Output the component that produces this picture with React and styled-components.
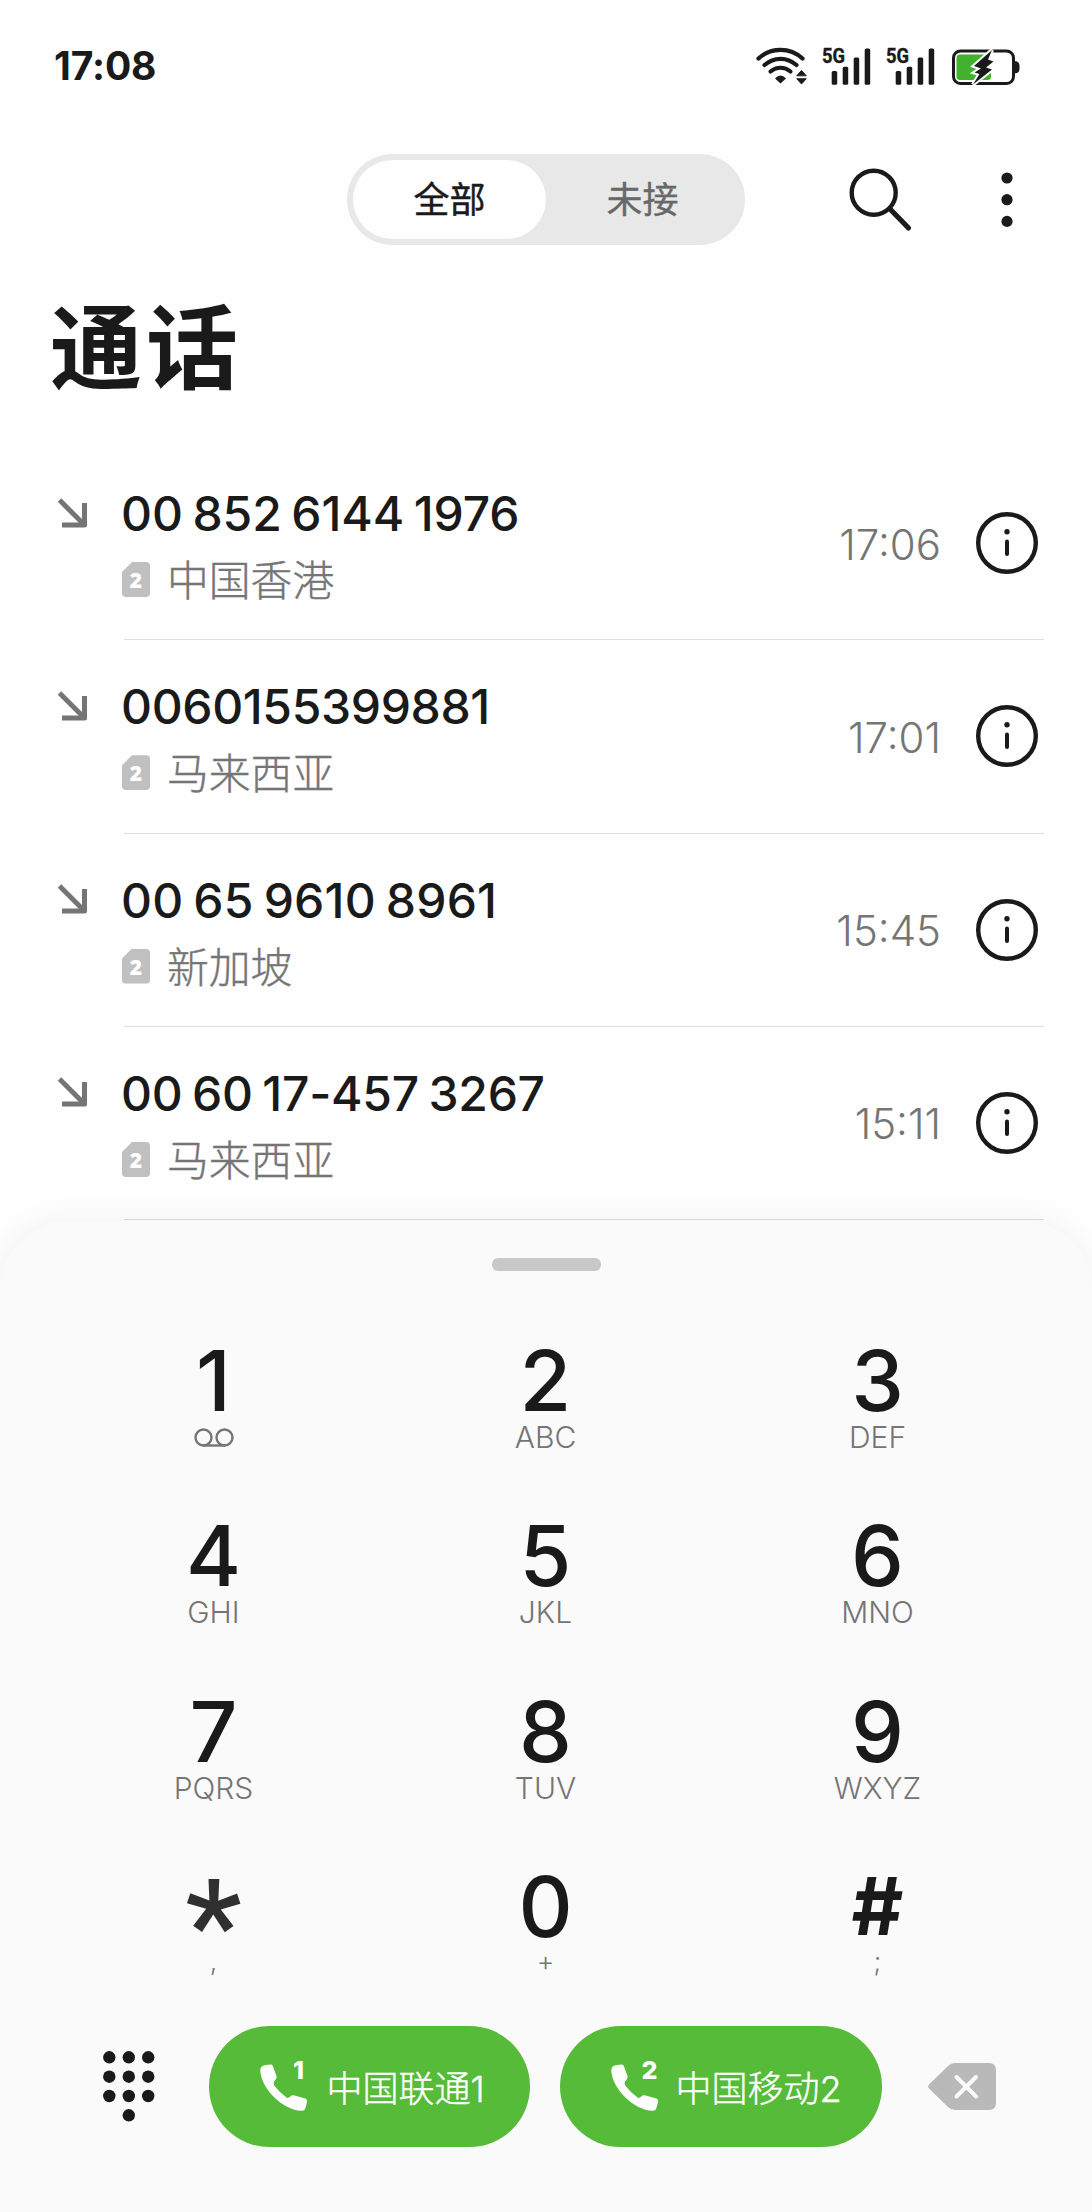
import React from "react";
import styled, { createGlobalStyle } from "styled-components";

const LATIN = `Inter, Roboto, "Noto Sans CJK SC", sans-serif`;
const CJK = `"Noto Sans CJK SC", "Noto Sans", sans-serif`;
const INK = "#1a1a1a";
const MUTED = "#757575";

const GlobalStyle = createGlobalStyle`
  * { box-sizing: border-box; }
  html, body { margin: 0; padding: 0; background: #fefefe; }
  body { font-family: ${LATIN}; color: ${INK}; }
  svg { display: block; flex: none; overflow: visible; }
  button { border: 0; padding: 0; background: none; font: inherit; color: inherit; }
`;

const Screen = styled.main`
  width: 1092px;
  height: 2212px;
  overflow: hidden;
  display: flex;
  flex-direction: column;
  background: #fefefe;
`;

const StatusBar = styled.header`
  height: 132px;
  padding: 0 72px 0 54px;
  display: flex;
  align-items: center;
  justify-content: space-between;
`;

const Clock = styled.span`
  font-size: 39px;
  font-weight: 650;
  line-height: 48px;
  letter-spacing: -0.1px;
`;

const StatusIcons = styled.div`
  display: flex;
  align-items: center;
  gap: 15px;
`;

const BatterySlot = styled.div`
  margin-left: 2px;
`;

const Toolbar = styled.nav`
  height: 113px;
  padding: 22px 77px 0 347px;
  display: flex;
  align-items: center;
`;

const Segmented = styled.div`
  width: 398px;
  height: 91px;
  padding: 6px;
  display: flex;
  border-radius: 46px;
  background: #e8e8e8;
`;

const Segment = styled.button`
  width: 193px;
  height: 79px;
  border-radius: 40px;
  background: ${(p) => (p.$active ? "#fefefe" : "transparent")};
  color: ${(p) => (p.$active ? INK : "#686868")};
  font-family: ${CJK};
  font-size: 36px;
  font-weight: 400;
  -webkit-text-stroke: 0.4px currentColor;
  line-height: 73px;
  padding-bottom: 4px;
`;

const ToolIcons = styled.div`
  margin-left: 104px;
  display: flex;
  align-items: center;
  gap: 88px;
`;

const Title = styled.h1`
  height: 202px;
  margin: 0;
  padding: 31px 0 0 50px;
  font-family: ${CJK};
  font-size: 92px;
  font-weight: 700;
  line-height: 132px;
  letter-spacing: 4px;
`;

const CallList = styled.ul`
  list-style: none;
  margin: 0;
  padding: 0;
`;

const CallRow = styled.li`
  height: 193.3px;
  display: flex;
  padding: 0 48px 0 58px;
`;

const ArrowCell = styled.div`
  width: 66px;
  padding-top: 50.5px;
`;

const CallBody = styled.div`
  flex: 1;
  display: flex;
  justify-content: space-between;
  border-bottom: 1px solid #dedede;
`;

const CallInfo = styled.div`
  margin-left: -3px;
  padding-top: 37px;
`;

const PhoneNumber = styled.div`
  font-size: 48px;
  font-weight: 500;
  line-height: 60px;
  letter-spacing: ${(p) => p.$track}px;
  word-spacing: -3px;
  white-space: nowrap;
`;

const Origin = styled.div`
  display: flex;
  align-items: center;
  gap: 17px;
  margin-top: 6px;
  padding-left: 1px;
`;

const SimBadge = styled.span`
  width: 28px;
  height: 35px;
  margin-top: 3px;
  border-radius: 4px;
  background: #c0c0c0;
  clip-path: polygon(0 10px, 10px 0, 100% 0, 100% 100%, 0 100%);
  color: #fff;
  font-family: "Open Sans", sans-serif;
  font-size: 21px;
  font-weight: 800;
  line-height: 36px;
  text-align: center;
`;

const Place = styled.span`
  font-family: ${CJK};
  font-size: 41.8px;
  font-weight: 300;
  -webkit-text-stroke: 0.4px currentColor;
  line-height: 56px;
  color: #757575;
`;

const CallMeta = styled.div`
  height: 62px;
  margin-top: 65px;
  margin-right: 6px;
  display: flex;
  align-items: center;
  gap: 35px;
`;

const CallTime = styled.time`
  padding-top: 3px;
  font-size: 42px;
  font-weight: 330;
  line-height: 50px;
  color: ${MUTED};
`;

const DialSheet = styled.section`
  position: relative;
  flex: 1;
  margin-top: 1px;
  padding: 37px 47.5px 0;
  display: flex;
  flex-direction: column;
  border-radius: 68px 68px 0 0;
  background: #fafafa;
  box-shadow: 0 0 32px rgba(0, 0, 0, 0.06);
`;

const Handle = styled.div`
  width: 109px;
  height: 13px;
  align-self: center;
  border-radius: 6px;
  background: #c8c8c8;
`;

const KeyGrid = styled.div`
  margin-top: 65px;
  display: grid;
  grid-template-columns: repeat(3, 332px);
  row-gap: 60.3px;
`;

const Key = styled.button`
  height: 115px;
  display: flex;
  flex-direction: column;
  align-items: center;
`;

const Digit = styled.span`
  height: 90px;
  font-family: ${(p) => p.$font || LATIN};
  font-size: ${(p) => p.$size || 84}px;
  font-weight: ${(p) => p.$weight || 500};
  line-height: ${(p) => p.$line || 90}px;
  color: ${(p) => p.$color || INK};
`;

const Hint = styled.span`
  height: 24px;
  margin-top: ${(p) => (p.$symbol ? -2 : -1)}px;
  display: flex;
  align-items: center;
  font-size: ${(p) => (p.$symbol ? 27 : 30)}px;
  font-weight: 330;
  line-height: 24px;
  color: ${MUTED};
`;

const Actions = styled.div`
  margin-top: 48.500px;
  padding-left: 55px;
  display: flex;
  align-items: center;
`;

const CallButton = styled.button`
  width: ${(p) => p.$width}px;
  height: 121px;
  margin-left: ${(p) => p.$gap}px;
  padding-left: 51px;
  display: flex;
  align-items: center;
  border-radius: 61px;
  background: #56bb39;
  color: #fff;
`;

const Carrier = styled.span`
  margin-left: ${(p) => p.$gap}px;
  font-family: ${CJK};
  font-size: 36px;
  font-weight: 300;
  -webkit-text-stroke: 0.4px currentColor;
  line-height: 50px;
  white-space: nowrap;
`;

const CarrierSlot = styled.span`
  font-family: ${LATIN};
  font-size: 36px;
  font-weight: 300;
  line-height: 1;
`;

const BackspaceSlot = styled.div`
  margin-left: 46px;
`;

const WifiIcon = () => (
  <svg width="51" height="38" viewBox="0 0 51 38" fill="none" stroke={INK} strokeWidth="4.2" strokeLinecap="round">
    <path d="M2.500 11.500C15 0 34 0 46.500 11.500" />
    <path d="M8.500 18C18 9.800 31 9.800 40.500 18" />
    <path d="M14.500 24.500C20.500 19.500 28.500 19.500 34.500 24.500" />
    <path d="M19 31.500Q24.500 25.500 30 31.500L24.500 36.500Z" fill={INK} stroke="none" />
    <path d="M41 28.500L45.500 23.500L50 28.500ZM41 32L45.500 37L50 32Z" fill={INK} stroke={INK} strokeWidth="1" strokeLinejoin="round" />
  </svg>
);

const SignalIcon = () => (
  <svg width="49" height="38" viewBox="0 0 49 38" fill={INK}>
    <text x="0" y="16" fontFamily="Roboto, sans-serif" fontWeight="700" fontSize="21" stroke={INK} strokeWidth="0.4" textLength="23" lengthAdjust="spacingAndGlyphs">5G</text>
    <rect x="9.700" y="24" width="5.500" height="13.700" rx="1.500" />
    <rect x="20.700" y="19.700" width="5.500" height="18" rx="1.500" />
    <rect x="31.700" y="10.500" width="5.500" height="27.200" rx="1.500" />
    <rect x="42.700" y="1.500" width="5.500" height="36.200" rx="1.500" />
  </svg>
);

const BatteryIcon = () => (
  <svg width="68" height="38" viewBox="0 0 68 38">
    <rect x="1.500" y="4" width="60" height="32.500" rx="7" fill="#fefefe" stroke={INK} strokeWidth="3" />
    <path d="M8 7.500H34L39 27V29.500Q39 33 35.500 33H8Q4.500 33 4.500 29.500V11Q4.500 7.500 8 7.500Z" fill="#43b02f" />
    <path d="M63.500 14.500Q67 15 67 18V22.500Q67 25.500 63.500 26Z" fill={INK} stroke={INK} strokeWidth="1" />
    <path d="M40 3L22 19L29 21.500L22.500 25.500L27.500 27L21 37.500L40 22.500L34 20.500L41.500 14.500L36 12.500Z" fill={INK} stroke="#fefefe" strokeWidth="4" paintOrder="stroke" />
  </svg>
);

const SearchIcon = () => (
  <svg width="64" height="64" viewBox="0 0 64 64" fill="none" stroke={INK} strokeLinecap="round">
    <circle cx="24.700" cy="24.700" r="22" strokeWidth="4.400" />
    <path d="M41 41L59.500 60" strokeWidth="5.200" />
  </svg>
);

const MoreIcon = () => (
  <svg width="12" height="56" viewBox="0 0 12 56" fill={INK}>
    <circle cx="6" cy="6" r="5.600" />
    <circle cx="6" cy="27.700" r="5.600" />
    <circle cx="6" cy="49.400" r="5.600" />
  </svg>
);

const IncomingArrow = () => (
  <svg width="30" height="30" viewBox="0 0 30 30" fill="none" stroke={MUTED} strokeWidth="5">
    <path d="M1.500 2L26 26.500" />
    <path d="M4 27H26.500V5" strokeLinejoin="round" />
  </svg>
);

const InfoIcon = () => (
  <svg width="62" height="62" viewBox="0 0 62 62" fill="none" stroke={INK}>
    <circle cx="31" cy="31" r="28.800" strokeWidth="4.400" />
    <circle cx="31" cy="19.700" r="2.700" fill={INK} stroke="none" />
    <path d="M31 29.500V42" strokeWidth="4" strokeLinecap="round" />
  </svg>
);

const VoicemailIcon = () => (
  <svg width="40" height="19" viewBox="0 0 40 19" fill="none" stroke={MUTED} strokeWidth="2.4">
    <circle cx="9.500" cy="9.500" r="8" />
    <circle cx="30.500" cy="9.500" r="8" />
    <path d="M9 17.500H31" />
  </svg>
);

const KeypadIcon = () => (
  <svg width="52" height="71" viewBox="0 0 52 71" fill={INK}>
    {[6.3, 25.7, 45].flatMap((y) => [6.3, 25.8, 45.2].map((x) => <circle key={`${x}-${y}`} cx={x} cy={y} r="6.200" />))}
    <circle cx="25.800" cy="64.300" r="6.200" />
  </svg>
);

const PhoneIcon = ({ sim }) => (
  <svg width="49" height="56" viewBox="0 0 49 56" fill="#fff">
    <path d="M5.500 7L11 6.600Q12.300 6.700 12.800 8L16.500 18Q17.200 20.500 15 22.500Q12.900 24.500 14.200 27.500Q19.500 34.500 26.800 39.800Q28.500 40.300 30 38.800Q31.800 36.800 34.500 37.500L45.500 40.500Q47.500 41.300 47.200 43.500L45.300 50.200Q44.600 52.700 42 52.800C22 52.500 0 29 .3 11.500Q.4 8.700 3 7.800Z" />
    <text x="38.500" y="20.500" textAnchor="middle" fontFamily="Inter, sans-serif" fontWeight="800" fontSize="25">{sim}</text>
  </svg>
);

const BackspaceIcon = () => (
  <svg width="69" height="47" viewBox="0 0 69 47" fill="none">
    <path d="M1 21.500L20 3Q23 0 27 0H61Q68 0 68 7V40Q68 47 61 47H27Q23 47 20 44L1 25.500Q-.7 23.500 1 21.500Z" fill="#b9b9b9" />
    <path d="M28.500 14L48 33.500M48 14L28.500 33.500" stroke="#fafafa" strokeWidth="4" strokeLinecap="round" />
  </svg>
);

const calls = [
  { number: "00 852 6144 1976", place: "中国香港", time: "17:06", track: -0.1 },
  { number: "0060155399881", place: "马来西亚", time: "17:01", track: -0.35 },
  { number: "00 65 9610 8961", place: "新加坡", time: "15:45", track: 0.2 },
  { number: "00 60 17-457 3267", place: "马来西亚", time: "15:11", track: -0.25 },
];

const keys = [
  { digit: "1", hint: <VoicemailIcon /> },
  { digit: "2", hint: "ABC" },
  { digit: "3", hint: "DEF" },
  { digit: "4", hint: "GHI" },
  { digit: "5", hint: "JKL" },
  { digit: "6", hint: "MNO" },
  { digit: "7", hint: "PQRS" },
  { digit: "8", hint: "TUV" },
  { digit: "9", hint: "WXYZ" },
  { digit: "*", hint: ",", size: 127, font: "Roboto, sans-serif", weight: 500, line: 127, color: "#303030", symbol: true },
  { digit: "0", hint: "+", symbol: true },
  { digit: "#", hint: ";", size: 80, weight: 650, line: 87, symbol: true },
];

export default function App() {
  return (
    <Screen>
      <GlobalStyle />
      <StatusBar>
        <Clock>17:08</Clock>
        <StatusIcons>
          <WifiIcon />
          <SignalIcon />
          <SignalIcon />
          <BatterySlot>
            <BatteryIcon />
          </BatterySlot>
        </StatusIcons>
      </StatusBar>
      <Toolbar>
        <Segmented>
          <Segment $active>全部</Segment>
          <Segment>未接</Segment>
        </Segmented>
        <ToolIcons>
          <SearchIcon />
          <MoreIcon />
        </ToolIcons>
      </Toolbar>
      <Title>通话</Title>
      <CallList>
        {calls.map((c) => (
          <CallRow key={c.number}>
            <ArrowCell>
              <IncomingArrow />
            </ArrowCell>
            <CallBody>
              <CallInfo>
                <PhoneNumber $track={c.track}>{c.number}</PhoneNumber>
                <Origin>
                  <SimBadge>2</SimBadge>
                  <Place>{c.place}</Place>
                </Origin>
              </CallInfo>
              <CallMeta>
                <CallTime>{c.time}</CallTime>
                <InfoIcon />
              </CallMeta>
            </CallBody>
          </CallRow>
        ))}
      </CallList>
      <DialSheet>
        <Handle />
        <KeyGrid>
          {keys.map((k) => (
            <Key key={k.digit}>
              <Digit $size={k.size} $font={k.font} $weight={k.weight} $line={k.line} $color={k.color}>
                {k.digit}
              </Digit>
              <Hint $symbol={k.symbol}>{k.hint}</Hint>
            </Key>
          ))}
        </KeyGrid>
        <Actions>
          <KeypadIcon />
          <CallButton $width={321} $gap={54}>
            <PhoneIcon sim="1" />
            <Carrier $gap={18}>中国联通<CarrierSlot>1</CarrierSlot></Carrier>
          </CallButton>
          <CallButton $width={322} $gap={30}>
            <PhoneIcon sim="2" />
            <Carrier $gap={16}>中国移动<CarrierSlot>2</CarrierSlot></Carrier>
          </CallButton>
          <BackspaceSlot>
            <BackspaceIcon />
          </BackspaceSlot>
        </Actions>
      </DialSheet>
    </Screen>
  );
}
